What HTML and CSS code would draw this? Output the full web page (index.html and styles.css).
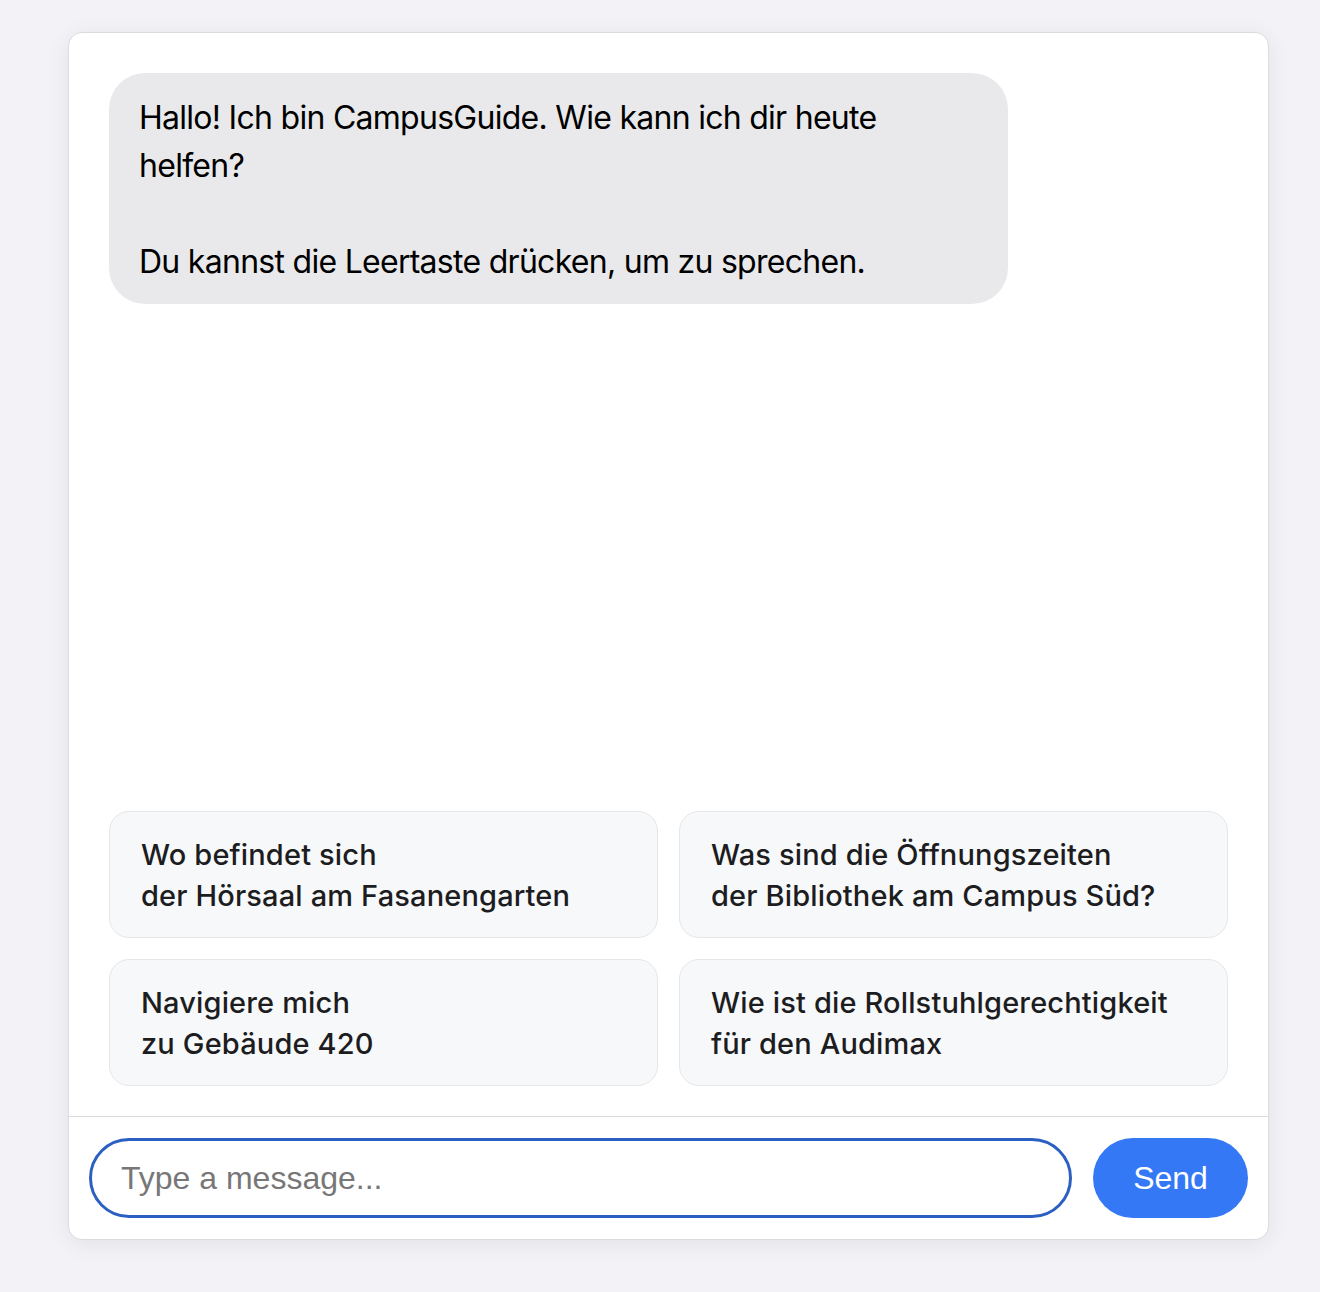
FILE: index.html
```html
<!DOCTYPE html>
<html lang="de">
<head>
<meta charset="utf-8">
<title>CampusGuide</title>
<link rel="stylesheet" href="styles.css">
</head>
<body>
<div class="chat">
  <div class="messages">
    <div class="bubble">Hallo! Ich bin CampusGuide. Wie kann ich dir heute helfen?<br><br>Du kannst die Leertaste drücken, um zu sprechen.</div>
  </div>
  <div class="suggestions">
    <button class="suggestion">Wo befindet sich<br>der Hörsaal am Fasanengarten</button>
    <button class="suggestion">Was sind die Öffnungszeiten<br>der Bibliothek am Campus Süd?</button>
    <button class="suggestion">Navigiere mich<br>zu Gebäude 420</button>
    <button class="suggestion">Wie ist die Rollstuhlgerechtigkeit<br>für den Audimax</button>
  </div>
  <div class="composer">
    <input class="input" type="text" placeholder="Type a message...">
    <button class="send">Send</button>
  </div>
</div>
</body>
</html>
```
FILE: styles.css
```css
* { box-sizing: border-box; }
html, body { margin: 0; padding: 0; }
body {
  background: #f2f2f7;
  font-family: Inter, "Noto Sans", sans-serif;
  padding: 32px 52px 0 68px;
  height: 1292px;
}
.chat {
  width: 1201px;
  height: 1208px;
  background: #fff;
  border: 1.5px solid #dcdce0;
  border-radius: 14px;
  box-shadow: 0 4px 24px rgba(0,0,0,0.07);
  display: flex;
  flex-direction: column;
  overflow: hidden;
}
.messages {
  flex: 1;
  padding: 40px 40px 0 40px;
}
.bubble {
  max-width: 899px;
  background: #e9e9eb;
  color: #000;
  border-radius: 36px;
  padding: 21px 30px 18px 30px;
  font-size: 32px;
  line-height: 48px;
  letter-spacing: -0.72px;
}
.suggestions {
  display: grid;
  grid-template-columns: 1fr 1fr;
  gap: 21px;
  padding: 0 40px 30px 40px;
}
.suggestion {
  text-align: left;
  font-family: Inter, "Noto Sans", sans-serif;
  font-size: 29px;
  font-weight: 500;
  line-height: 41px;
  letter-spacing: 0.15px;
  color: #1d1d1f;
  background: #f7f8fa;
  border: 1.5px solid #e6e6ea;
  border-radius: 20px;
  padding: 22px 31px;
  height: 127px;
}
.composer {
  border-top: 1.5px solid #dcdce0;
  display: flex;
  gap: 21px;
  padding: 21px 20px 21px 20px;
}
.input {
  flex: 1;
  height: 80px;
  border: 3px solid #2c5fc2;
  border-radius: 40px;
  padding: 0 29px;
  font-family: "Liberation Sans", Arial, sans-serif;
  font-size: 32px;
  outline: none;
  color: #000;
}
.input::placeholder { color: #777; }
.send {
  width: 155px;
  height: 80px;
  border: none;
  border-radius: 40px;
  background: #3478f6;
  color: #fff;
  font-family: "Liberation Sans", Arial, sans-serif;
  font-size: 32px;
  font-weight: 500;
}
```
